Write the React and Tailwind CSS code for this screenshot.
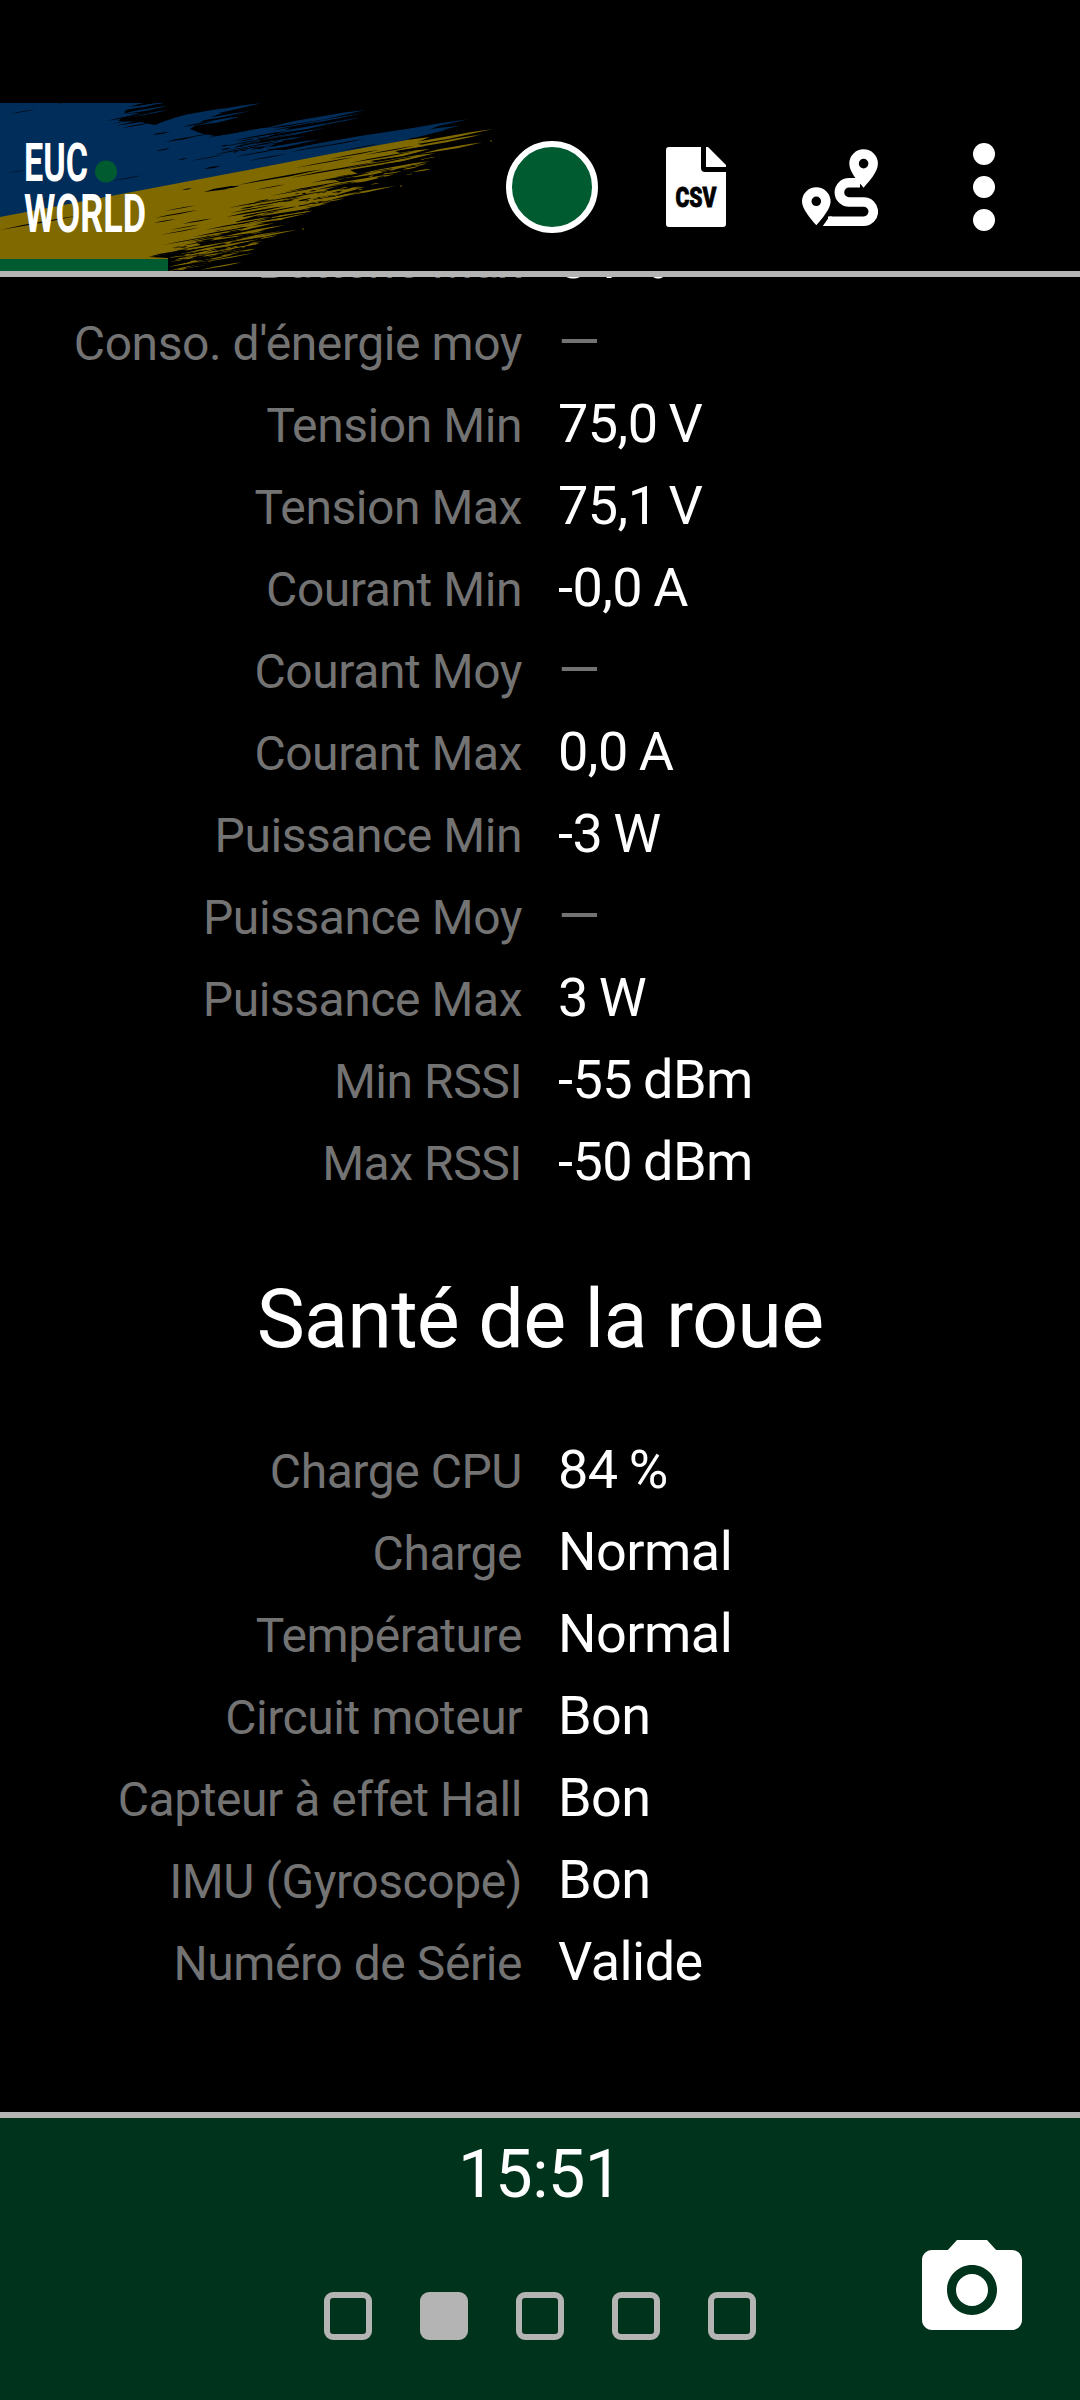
import { MdPhotoCamera } from "react-icons/md";

const stats = [
  { label: "Batterie Max", value: "84 %" },
  { label: "Conso. d'énergie moy", value: null },
  { label: "Tension Min", value: "75,0 V" },
  { label: "Tension Max", value: "75,1 V" },
  { label: "Courant Min", value: "-0,0 A" },
  { label: "Courant Moy", value: null },
  { label: "Courant Max", value: "0,0 A" },
  { label: "Puissance Min", value: "-3 W" },
  { label: "Puissance Moy", value: null },
  { label: "Puissance Max", value: "3 W" },
  { label: "Min RSSI", value: "-55 dBm" },
  { label: "Max RSSI", value: "-50 dBm" },
];

const health = [
  { label: "Charge CPU", value: "84 %" },
  { label: "Charge", value: "Normal" },
  { label: "Température", value: "Normal" },
  { label: "Circuit moteur", value: "Bon" },
  { label: "Capteur à effet Hall", value: "Bon" },
  { label: "IMU (Gyroscope)", value: "Bon" },
  { label: "Numéro de Série", value: "Valide" },
];

const BLUE = "#002d5a";
const YELLOW = "#806a00";

// Brush hairs: [x, y, length, thickness], all leaning the same way
const blueHairs = [
  [122, 110, 40, 2.5], [118, 115, 50, 2], [125, 118, 42, 1.6], [150, 105, 18, 1.5],
  [165, 121, 96, 4], [170, 119, 60, 3], [185, 127, 55, 3], [180, 124, 70, 2],
  [262, 129, 103, 4], [250, 134, 115, 1.8], [262, 136, 75, 2.5], [255, 141, 70, 2],
  [320, 125, 40, 1.2], [230, 150, 75, 3], [240, 154, 80, 3], [225, 142, 70, 4],
  [330, 145, 139, 4], [350, 146, 110, 5], [370, 144, 78, 4], [300, 150, 120, 3],
];

const blackOnBlue = [
  [106, 121, 50, 1.4], [110, 124, 55, 1], [115, 126, 45, 1.4], [122, 128, 30, 1.2],
  [123, 112, 46, 2], [140, 117, 26, 2.4], [128, 107, 40, 1.6], [148, 123, 24, 1.4],
  [152, 135, 18, 1.3], [165, 142, 32, 1.4], [156, 151, 14, 1], [178, 160, 9, 1.1],
  [204, 169, 17, 1.8], [182, 127, 32, 1.4], [196, 131, 42, 3.4], [175, 140, 60, 1],
  [215, 148, 60, 1], [212, 155, 50, 1], [232, 141, 60, 1.4], [240, 146, 60, 1.5],
  [220, 152, 60, 1], [235, 157, 45, 1], [248, 161, 40, 1], [190, 161, 35, 0.8],
  [205, 138, 45, 1.2], [290, 152, 40, 1], [315, 148, 50, 1], [340, 151, 40, 0.8],
  [270, 131, 55, 1.2], [280, 135, 60, 1.4], [57, 104, 30, 0.8], [10, 114, 25, 0.6],
  [8, 173, 18, 0.5], [40, 200, 18, 0.6], [112, 181, 30, 0.6],
];

const yellowHairs = [
  [380, 150, 113, 3.2], [370, 155, 114, 2], [400, 150, 78, 2], [420, 154, 62, 2.4],
  [360, 162, 70, 4], [350, 169, 85, 4], [355, 175, 75, 2.4], [330, 181, 72, 3],
  [320, 188, 75, 3.5], [325, 199, 70, 2], [300, 199, 65, 5], [290, 206, 60, 4],
  [270, 213, 62, 2.4], [255, 217, 73, 2.6], [250, 222, 60, 2], [240, 226, 66, 2],
  [225, 243, 72, 1.8], [215, 238, 70, 2.2], [205, 236, 70, 3], [195, 243, 70, 3],
  [190, 248, 92, 1.6], [185, 253, 75, 2.2], [180, 258, 78, 1.6], [170, 262, 76, 2.4],
  [168, 267, 64, 2.4], [168, 271, 50, 2], [205, 262, 48, 1.4], [200, 270, 42, 1.4],
  [168, 258, 50, 4], [172, 252, 60, 3], [215, 228, 60, 4], [210, 233, 55, 3],
];

const blackOnYellow = [
  [0, 230, 80, 1.4], [204, 192, 34, 2.6], [222, 189, 18, 1.4], [182, 190, 10, 1],
  [238, 185, 85, 1.8], [155, 218, 43, 1], [182, 224, 30, 1.3], [154, 223, 22, 1],
  [226, 217, 60, 1.8], [230, 213, 45, 1], [228, 208, 50, 1], [163, 245, 60, 1],
  [193, 237, 60, 1.4], [188, 242, 65, 1.6], [205, 230, 65, 1.2], [148, 257, 40, 2],
  [165, 258, 50, 2], [178, 250, 75, 1.6], [172, 265, 60, 2], [180, 269, 60, 2.2],
  [200, 256, 60, 2], [160, 235, 40, 0.8], [170, 230, 30, 0.8], [295, 168, 60, 1],
  [290, 178, 90, 1.4], [260, 203, 70, 1], [255, 190, 30, 0.8], [310, 183, 60, 1.2],
  [285, 192, 60, 1.2], [340, 170, 75, 1.4], [350, 163, 65, 1.2], [330, 159, 50, 0.9],
  [365, 155, 50, 1], [240, 217, 70, 1.2], [245, 208, 60, 1], [325, 181, 50, 1.4],
  [315, 190, 45, 1.6], [270, 196, 60, 1], [255, 222, 50, 1.4], [165, 211, 30, 0.8],
];

function hairPath([x, y, len, w]) {
  const dy = -0.185;
  return `M${x} ${y}L${x + len * 0.3} ${y + dy * len * 0.3 - w / 2}L${x + len * 0.8} ${y + dy * len * 0.8 - w / 3}L${x + len} ${y + dy * len}L${x + len * 0.6} ${y + dy * len * 0.6 + w / 2}Z`;
}

function Hairs({ items, fill }) {
  return <path fill={fill} d={items.map(hairPath).join("")} />;
}

// Broken fringe from a small fixed-seed generator, so it never changes between renders
function fringe(seed, count, x0, x1, top, slope, height) {
  let s = seed;
  const rnd = () => {
    s = (s * 16807) % 2147483647;
    return s / 2147483647;
  };
  rnd();
  const out = [];
  for (let i = 0; i < count; i++) {
    const x = x0 + rnd() * (x1 - x0);
    const y = top + (x - x0) * slope + rnd() * height;
    out.push([x, y, 4 + rnd() * 16, 0.5 + rnd() * 0.9]);
  }
  return out;
}

function BrandLogo() {
  return (
    <svg className="h-[168px] w-[506px] shrink-0" viewBox="0 103 506 168">
      <path
        fill={BLUE}
        d="M0 103H145L132 106 140 107 126 110 124 114 140 113 122 118 118 121 140 122 155 125 165 121 185 115 205 112 222 113 206 119 196 125 190 129 200 133 215 136 235 133 262 128 292 127 275 134 262 139 255 145 275 144 262 150 285 150 320 143 360 136 400 130 440 125 420 134 407 140 240 173 0 220Z"
      />
      <Hairs items={blueHairs} fill={BLUE} />
      <Hairs items={blackOnBlue} fill="#000" />
      <Hairs items={fringe(31, 24, 215, 290, 140, -0.1, 16)} fill="#000" />
      <path
        fill={YELLOW}
        d="M0 217L240 171.5 330 154 407 140 430 137 415 143 425 146 395 151 405 155 370 161 385 164 350 170 360 175 335 180 345 184 325 190 340 194 312 199 325 203 290 208 280 212 255 216 235 222 250 224 215 231 225 236 195 242 205 247 172 253 150 257 168 258V271H0Z"
      />
      <Hairs items={yellowHairs} fill={YELLOW} />
      <Hairs items={blackOnYellow} fill="#000" />
      <Hairs items={fringe(77, 58, 235, 400, 208, -0.31, 22)} fill="#000" />
      <Hairs items={fringe(41, 44, 170, 240, 248, -0.35, 24)} fill="#000" />
      <Hairs items={fringe(12, 34, 170, 260, 258, -0.3, 16)} fill={YELLOW} />
      <Hairs items={fringe(19, 36, 270, 420, 212, -0.36, 12)} fill={YELLOW} />
      <circle cx="401" cy="186" r="0.8" fill={YELLOW} />
      <circle cx="491" cy="141" r="0.8" fill={YELLOW} />
      <circle cx="303" cy="229" r="0.8" fill={YELLOW} />
      <rect y="259" width="168" height="12" fill="#005b30" />
      <circle cx="106" cy="171.5" r="11" fill="#005b30" />
      <g fill="#fff" className="font-['Roboto',sans-serif] text-[54px] font-bold">
        <text x="24" y="181" textLength="64" lengthAdjust="spacingAndGlyphs">EUC</text>
        <text x="24" y="232" textLength="122" lengthAdjust="spacingAndGlyphs">WORLD</text>
      </g>
    </svg>
  );
}

function CsvIcon() {
  return (
    <svg className="h-20 w-[60px]" viewBox="0 0 60 80" fill="#fff">
      <path d="M3 0H35V21Q35 25 39 25H60V77Q60 80 57 80H3Q0 80 0 77V3Q0 0 3 0Z" />
      <path d="M40 0H42L60 18V20H40Z" />
      <text
        x="9.5"
        y="59.5"
        textLength="41"
        lengthAdjust="spacingAndGlyphs"
        fill="#000"
        stroke="#000"
        strokeWidth="0.8"
        className="font-['Roboto',sans-serif] text-[28px] font-black"
      >
        CSV
      </text>
    </svg>
  );
}

function RouteIcon() {
  return (
    <svg className="h-[78px] w-[76px]" viewBox="802 149 76 78">
      <path
        d="M860 182.8H849a9.6 9.6 0 0 0 0 19.2H863.7a9.6 9.6 0 0 1 0 19.2H828"
        fill="none"
        stroke="#fff"
        strokeWidth="9.6"
      />
      <path d="M829.5 216.4H832V226H822.8Z" fill="#fff" />
      <path
        fill="#fff"
        fillRule="evenodd"
        d="M863.6 149.2a14.3 14.3 0 0 1 14.3 14.3C877.9 172 870 180 863.6 187.8 857 180 849.3 172 849.3 163.5a14.3 14.3 0 0 1 14.3-14.3Zm0 9.6a4.8 4.8 0 1 0 0 9.6 4.8 4.8 0 0 0 0-9.6Z"
      />
      <path
        fill="#fff"
        fillRule="evenodd"
        d="M816.3 187.2a14.3 14.3 0 0 1 14.3 14.3C830.6 209 822.7 217.7 816.3 225.3 810 217.7 802 209 802 201.5a14.3 14.3 0 0 1 14.3-14.3Zm0 9.3a4.8 4.8 0 1 0 0 9.6 4.8 4.8 0 0 0 0-9.6Z"
      />
    </svg>
  );
}

function StatRow({ label, value }) {
  return (
    <div className="flex h-[82px] items-baseline whitespace-nowrap leading-[82px]">
      <span className="w-[522px] text-right text-[48px] tracking-[-0.44px] text-[#737373]">{label}</span>
      <span
        className={`ml-9 text-[54px] tracking-[-0.54px] [word-spacing:-1.8px] ${value ? "text-white" : "text-[#737373]"}`}
      >
        {value || "—"}
      </span>
    </div>
  );
}

export default function App() {
  return (
    <div className="flex h-[2400px] w-[1080px] flex-col overflow-hidden bg-black font-['Roboto',sans-serif] text-white">
      <header className="flex h-[277px] shrink-0 items-start border-b-[6px] border-[#b4b4b4] pt-[103px]">
        <BrandLogo />
        <div className="flex h-[168px] flex-1 items-center">
          <span className="h-[92px] w-[92px] rounded-full border-[6px] border-white bg-[#005b30]" />
          <span className="ml-[68px]">
            <CsvIcon />
          </span>
          <span className="ml-[76px] pt-0.5">
            <RouteIcon />
          </span>
          <span className="ml-[95px] flex flex-col gap-[11px]">
            <span className="h-[22px] w-[22px] rounded-full bg-white" />
            <span className="h-[22px] w-[22px] rounded-full bg-white" />
            <span className="h-[22px] w-[22px] rounded-full bg-white" />
          </span>
        </div>
      </header>

      <main className="h-[1835px] shrink-0 overflow-hidden">
        <div className="-mt-[58px]">
          {stats.map((row) => (
            <StatRow key={row.label} {...row} />
          ))}
        </div>
        <h2 className="h-[226px] pt-[57px] text-center text-[81px] leading-[120px] tracking-[-0.8px]">
          Santé de la roue
        </h2>
        {health.map((row) => (
          <StatRow key={row.label} {...row} />
        ))}
      </main>

      <footer className="relative flex flex-1 flex-col items-center border-t-[6px] border-[#b4b4b4] bg-[#00331c]">
        <div className="mt-[17px] text-[67px] leading-[78px] tracking-[-0.6px]">15:51</div>
        <div className="mt-[79px] flex gap-12">
          {[0, 1, 2, 3, 4].map((page) => (
            <span
              key={page}
              className={`h-12 w-12 rounded-[9px] border-[6px] border-[#b4b4b4] ${page === 1 ? "bg-[#b4b4b4]" : ""}`}
            />
          ))}
        </div>
        <MdPhotoCamera className="absolute right-12 top-28 h-[120px] w-[120px]" />
      </footer>
    </div>
  );
}
